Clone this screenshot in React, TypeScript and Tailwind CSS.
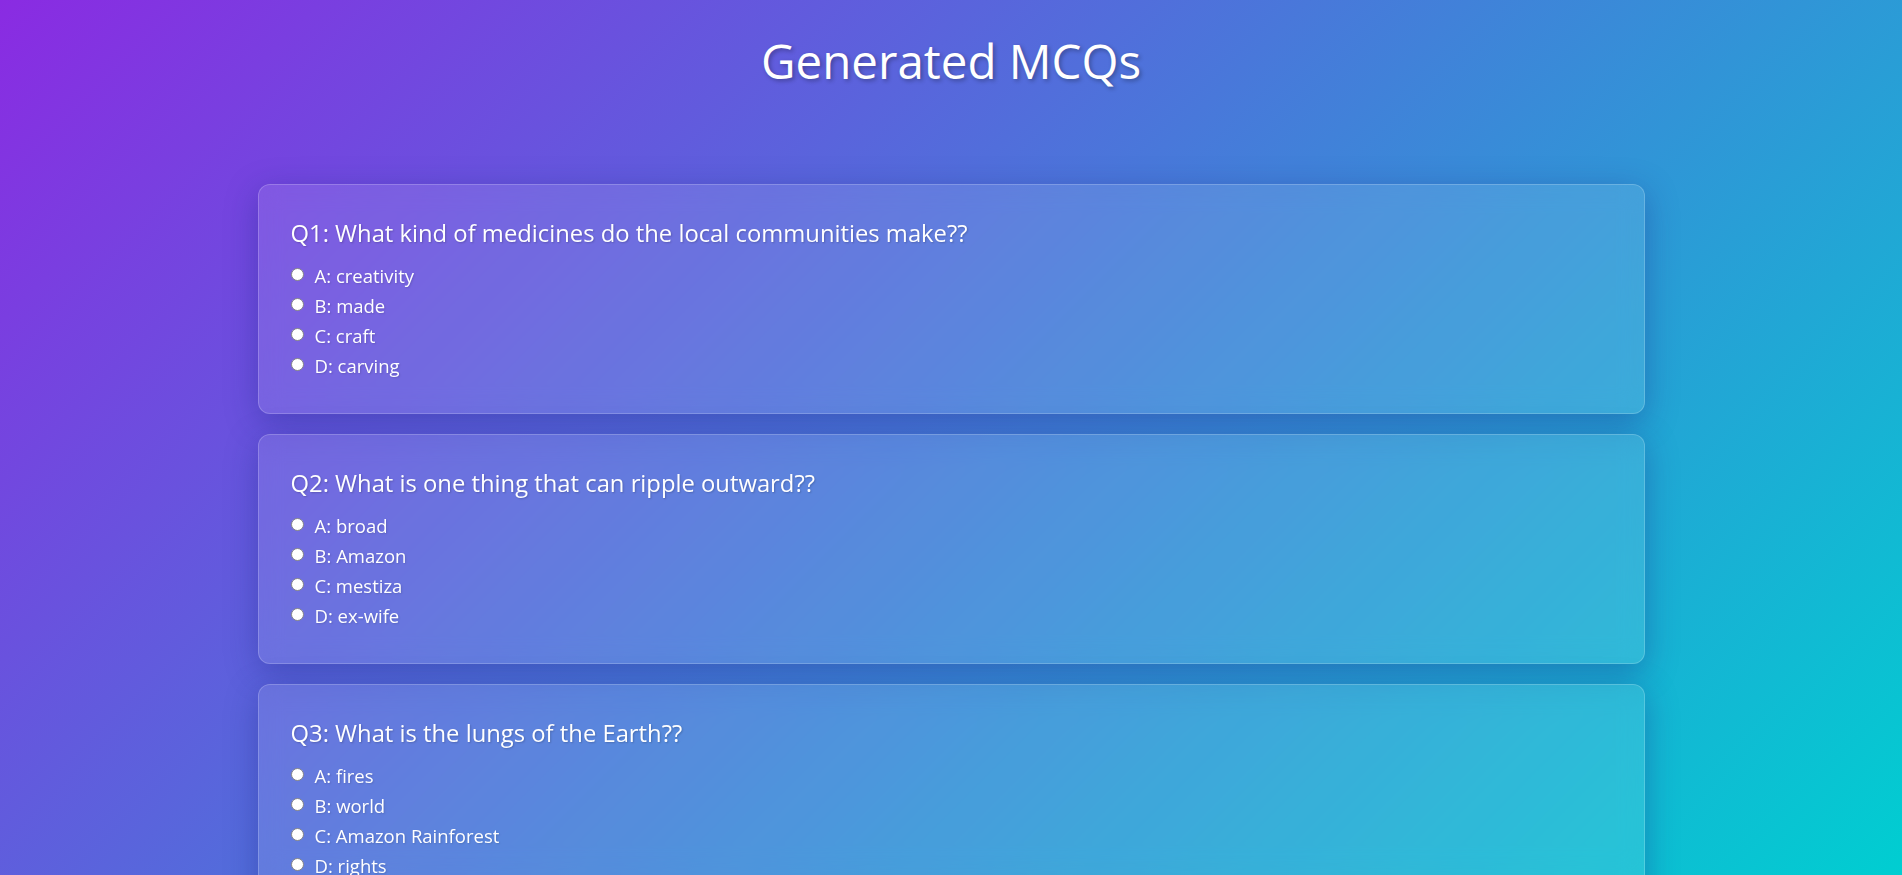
import React from 'react';

interface Mcq {
  question: string;
  options: string[];
}

const mcqs: Mcq[] = [
  {
    question: 'What kind of medicines do the local communities make??',
    options: ['creativity', 'made', 'craft', 'carving'],
  },
  {
    question: 'What is one thing that can ripple outward??',
    options: ['broad', 'Amazon', 'mestiza', 'ex-wife'],
  },
  {
    question: 'What is the lungs of the Earth??',
    options: ['fires', 'world', 'Amazon Rainforest', 'rights'],
  },
];

const letters = ['A', 'B', 'C', 'D'];

const McqCard: React.FC<{ mcq: Mcq; index: number }> = ({ mcq, index }) => {
  return (
    <div className="rounded-xl border border-white/20 bg-white/10 px-8 pt-8 pb-8 shadow-[0_8px_32px_rgba(31,38,135,0.37)] backdrop-blur-md">
      <h3 className="mb-3 text-[23.8px] leading-8 font-normal [text-shadow:1px_1px_2px_rgba(0,0,0,0.2)]">
        Q{index + 1}: {mcq.question}
      </h3>
      <div className="flex flex-col">
        {mcq.options.map((opt, i) => (
          <label key={i} className="flex h-[30px] items-center text-[18.5px] [text-shadow:1px_1px_2px_rgba(0,0,0,0.15)]">
            <input
              type="radio"
              name={`q${index}`}
              className="m-0 mr-[11px] -mt-[4px] h-[13px] w-[13px] appearance-none rounded-full border border-[#858585] bg-white"
            />
            <span>
              {letters[i]}: {opt}
            </span>
          </label>
        ))}
      </div>
    </div>
  );
};

export default function App() {
  return (
    <div
      className="min-h-screen bg-[linear-gradient(135deg,#8a2be2,#00ced1)] bg-fixed text-white"
      style={{ fontFamily: '"Open Sans", "Noto Sans", sans-serif' }}
    >
      <h1 className="pt-[30px] text-center text-[47.5px] leading-[62px] font-normal [text-shadow:2px_2px_4px_rgba(0,0,0,0.3)]">
        Generated MCQs
      </h1>
      <div className="mx-auto mt-[92px] flex w-[1387px] flex-col gap-5 pb-10">
        {mcqs.map((m, i) => (
          <McqCard key={i} mcq={m} index={i} />
        ))}
      </div>
    </div>
  );
}
